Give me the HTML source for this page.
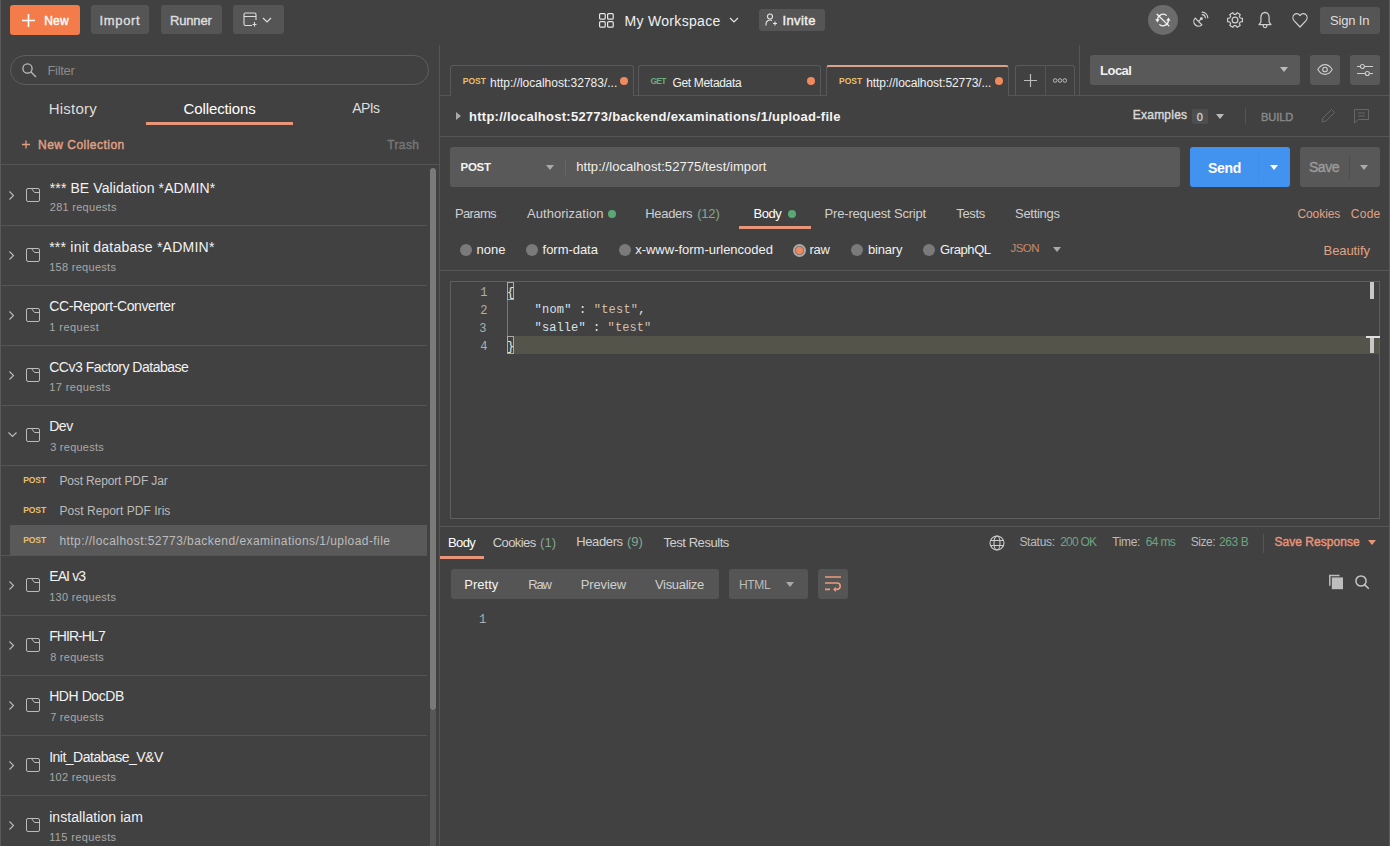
<!DOCTYPE html>
<html><head><meta charset="utf-8">
<style>
*{box-sizing:border-box;margin:0;padding:0}
html,body{width:1390px;height:846px;overflow:hidden;background:#414141;font-family:"Liberation Sans",sans-serif;color:#e6e6e6}
.a{position:absolute;white-space:nowrap;line-height:1.2}
.btn{position:absolute;background:#555;border-radius:3px}
.hl{position:absolute;height:1px;background:#555}
.vl{position:absolute;width:1px;background:#555}
svg{position:absolute;overflow:visible}
.g{color:#84a890}
</style></head><body>

<!-- left border strip -->
<div class="vl" style="left:0;top:0;height:846px;background:#5a5a5a"></div>

<!-- ===== TOP BAR ===== -->
<div class="btn" style="left:10px;top:5px;width:70px;height:30px;background:#f47b4a"></div>
<svg style="left:22px;top:14px" width="13" height="13"><path d="M6.5 0V13M0 6.5H13" stroke="#fff" stroke-width="1.6"/></svg>

<div class="btn" style="left:91px;top:5px;width:58px;height:29px"></div>
<div class="btn" style="left:161px;top:5px;width:61px;height:29px"></div>
<div class="btn" style="left:233px;top:5px;width:51px;height:29px"></div>
<svg style="left:243px;top:12px" width="16" height="16"><path d="M9 13.5H2.5a1.5 1.5 0 0 1-1.5-1.5V2.5A1.5 1.5 0 0 1 2.5 1h9A1.5 1.5 0 0 1 13 2.5V8M1 4.5h12M11.5 10v4.5M9.5 12.5h4" stroke="#ddd" stroke-width="1.1" fill="none"/></svg>
<svg style="left:262px;top:17px" width="10" height="6"><path d="M1 1l4 4 4-4" stroke="#ddd" stroke-width="1.2" fill="none"/></svg>

<!-- workspace -->
<svg style="left:599px;top:13px" width="16" height="15"><g stroke="#e6e6e6" stroke-width="1.2" fill="none"><rect x="0.6" y="0.6" width="5.6" height="5.6" rx="1"/><rect x="8.6" y="0.6" width="5.6" height="5.6" rx="1"/><rect x="0.6" y="8.6" width="5.6" height="5.6" rx="1"/><rect x="8.6" y="8.6" width="5.6" height="5.6" rx="1"/></g></svg>
<svg style="left:729px;top:17px" width="10" height="6"><path d="M1 1l4 4 4-4" stroke="#e6e6e6" stroke-width="1.2" fill="none"/></svg>
<div class="btn" style="left:759px;top:9px;width:66px;height:22px"></div>
<svg style="left:765px;top:13px" width="12" height="13"><g stroke="#e6e6e6" stroke-width="1.1" fill="none"><circle cx="5" cy="3.5" r="2.5"/><path d="M1 12.5V11a4 4 0 0 1 6-3.4M8 10.5h4M10 8.5v4"/></g></svg>

<!-- right icons -->

<svg style="left:1148px;top:5px" width="30" height="30"><circle cx="15" cy="15" r="15" fill="#6b6b6b"/>
<g stroke="#f2f2f2" stroke-width="1.3" fill="none" stroke-linecap="round">
<path d="M18.2 10.3A5.4 5.4 0 0 0 9.6 14.6"/><path d="M11.8 19.7A5.4 5.4 0 0 0 20.4 15.4"/>
<path d="M9.1 9.3L20.9 20.9"/></g>
<path d="M7.2 14.2h4.4L9.4 17.4z M18.2 15.8h4.4L20.4 12.6z" fill="#f2f2f2"/>
</svg>
<svg style="left:1192px;top:11px" width="17" height="17"><g stroke="#d0d0d0" stroke-width="1.2" fill="none" stroke-linecap="round">
<path d="M3.2 7.2A4.6 4.6 0 0 0 9.8 13.8z"/><path d="M6.5 10.5L9.2 7.8"/><circle cx="9.4" cy="7.6" r="0.9" fill="#d0d0d0"/>
<path d="M10.2 3.6A3.6 3.6 0 0 1 13.4 6.8"/><path d="M10.2 1.2A6 6 0 0 1 15.8 6.8"/>
</g></svg>
<svg style="left:1227px;top:12px" width="16" height="16"><g stroke="#d0d0d0" stroke-width="1.2" fill="none" stroke-linejoin="round"><path d="M13.24 6.01 L15.41 6.29 L15.41 9.71 L13.24 9.99 L12.34 11.54 L13.18 13.56 L10.22 15.27 L8.90 13.53 L7.10 13.53 L5.78 15.27 L2.82 13.56 L3.66 11.54 L2.76 9.99 L0.59 9.71 L0.59 6.29 L2.76 6.01 L3.66 4.46 L2.82 2.44 L5.78 0.73 L7.10 2.47 L8.90 2.47 L10.22 0.73 L13.18 2.44 L12.34 4.46Z"/><circle cx="8" cy="8" r="2.9"/></g></svg>
<svg style="left:1258px;top:11px" width="14" height="18"><g stroke="#d0d0d0" stroke-width="1.2" fill="none" stroke-linejoin="round">
<path d="M7 1.6C4.2 1.6 2.9 3.8 2.9 6.6V11.2L1 13.6H13L11.1 11.2V6.6C11.1 3.8 9.8 1.6 7 1.6z"/><path d="M5.2 13.8V14.8A1.8 1.8 0 0 0 8.8 14.8V13.8"/><path d="M6.3 1.3h1.4"/>
</g></svg>
<svg style="left:1292px;top:12px" width="16" height="16"><path d="M8 3.6C6.6 1.4 3.8 1.1 2.2 2.6C0.4 4.3 0.6 7 2.2 8.8L8 15L13.8 8.8C15.4 7 15.6 4.3 13.8 2.6C12.2 1.1 9.4 1.4 8 3.6z" stroke="#d0d0d0" stroke-width="1.2" fill="none" stroke-linejoin="round"/></svg>

<div class="btn" style="left:1320px;top:7px;width:60px;height:27px"></div>

<!-- ===== SIDEBAR ===== -->
<div class="a" style="left:10px;top:55px;width:419px;height:30px;border:1px solid #5e5e5e;border-radius:15px"></div>
<svg style="left:22px;top:63px" width="15" height="15"><g stroke="#bbb" stroke-width="1.3" fill="none"><circle cx="5.5" cy="5.5" r="4.6"/><path d="M9 9l5 5"/></g></svg>

<div class="a" style="left:146px;top:122px;width:147px;height:3px;background:#e8957a"></div>

<svg style="left:22px;top:140px" width="8" height="9"><path d="M4 0.5V8.5M0 4.5H8" stroke="#e0a080" stroke-width="1.3"/></svg>
<div class="hl" style="left:0;top:164px;width:439px"></div>

<svg style="left:9px;top:191px" width="6" height="9"><path d="M0.5 0.5l4 4-4 4" stroke="#bbb" stroke-width="1.1" fill="none"/></svg>
<svg style="left:26px;top:188px" width="14" height="14"><path d="M2 0.5h10a1.5 1.5 0 0 1 1.5 1.5v10a1.5 1.5 0 0 1-1.5 1.5H2A1.5 1.5 0 0 1 0.5 12V2A1.5 1.5 0 0 1 2 0.5zM5.5 0.5l3 4h5" stroke="#bbb" stroke-width="1" fill="none"/></svg>
<div class="hl" style="left:0;top:225px;width:427px"></div>
<svg style="left:9px;top:251px" width="6" height="9"><path d="M0.5 0.5l4 4-4 4" stroke="#bbb" stroke-width="1.1" fill="none"/></svg>
<svg style="left:26px;top:248px" width="14" height="14"><path d="M2 0.5h10a1.5 1.5 0 0 1 1.5 1.5v10a1.5 1.5 0 0 1-1.5 1.5H2A1.5 1.5 0 0 1 0.5 12V2A1.5 1.5 0 0 1 2 0.5zM5.5 0.5l3 4h5" stroke="#bbb" stroke-width="1" fill="none"/></svg>
<div class="hl" style="left:0;top:285px;width:427px"></div>
<svg style="left:9px;top:311px" width="6" height="9"><path d="M0.5 0.5l4 4-4 4" stroke="#bbb" stroke-width="1.1" fill="none"/></svg>
<svg style="left:26px;top:308px" width="14" height="14"><path d="M2 0.5h10a1.5 1.5 0 0 1 1.5 1.5v10a1.5 1.5 0 0 1-1.5 1.5H2A1.5 1.5 0 0 1 0.5 12V2A1.5 1.5 0 0 1 2 0.5zM5.5 0.5l3 4h5" stroke="#bbb" stroke-width="1" fill="none"/></svg>
<div class="hl" style="left:0;top:345px;width:427px"></div>
<svg style="left:9px;top:371px" width="6" height="9"><path d="M0.5 0.5l4 4-4 4" stroke="#bbb" stroke-width="1.1" fill="none"/></svg>
<svg style="left:26px;top:368px" width="14" height="14"><path d="M2 0.5h10a1.5 1.5 0 0 1 1.5 1.5v10a1.5 1.5 0 0 1-1.5 1.5H2A1.5 1.5 0 0 1 0.5 12V2A1.5 1.5 0 0 1 2 0.5zM5.5 0.5l3 4h5" stroke="#bbb" stroke-width="1" fill="none"/></svg>
<div class="hl" style="left:0;top:405px;width:427px"></div>
<svg style="left:8px;top:432px" width="9" height="6"><path d="M0.5 0.5l4 4 4-4" stroke="#bbb" stroke-width="1.1" fill="none"/></svg>
<svg style="left:26px;top:428px" width="14" height="14"><path d="M2 0.5h10a1.5 1.5 0 0 1 1.5 1.5v10a1.5 1.5 0 0 1-1.5 1.5H2A1.5 1.5 0 0 1 0.5 12V2A1.5 1.5 0 0 1 2 0.5zM5.5 0.5l3 4h5" stroke="#bbb" stroke-width="1" fill="none"/></svg>
<div class="hl" style="left:0;top:465px;width:427px"></div>
<div class="a" style="left:10px;top:525px;width:417px;height:30px;background:#595959"></div>
<div class="hl" style="left:0;top:555px;width:427px"></div>
<svg style="left:9px;top:581px" width="6" height="9"><path d="M0.5 0.5l4 4-4 4" stroke="#bbb" stroke-width="1.1" fill="none"/></svg>
<svg style="left:26px;top:578px" width="14" height="14"><path d="M2 0.5h10a1.5 1.5 0 0 1 1.5 1.5v10a1.5 1.5 0 0 1-1.5 1.5H2A1.5 1.5 0 0 1 0.5 12V2A1.5 1.5 0 0 1 2 0.5zM5.5 0.5l3 4h5" stroke="#bbb" stroke-width="1" fill="none"/></svg>
<div class="hl" style="left:0;top:615px;width:427px"></div>
<svg style="left:9px;top:641px" width="6" height="9"><path d="M0.5 0.5l4 4-4 4" stroke="#bbb" stroke-width="1.1" fill="none"/></svg>
<svg style="left:26px;top:638px" width="14" height="14"><path d="M2 0.5h10a1.5 1.5 0 0 1 1.5 1.5v10a1.5 1.5 0 0 1-1.5 1.5H2A1.5 1.5 0 0 1 0.5 12V2A1.5 1.5 0 0 1 2 0.5zM5.5 0.5l3 4h5" stroke="#bbb" stroke-width="1" fill="none"/></svg>
<div class="hl" style="left:0;top:675px;width:427px"></div>
<svg style="left:9px;top:701px" width="6" height="9"><path d="M0.5 0.5l4 4-4 4" stroke="#bbb" stroke-width="1.1" fill="none"/></svg>
<svg style="left:26px;top:698px" width="14" height="14"><path d="M2 0.5h10a1.5 1.5 0 0 1 1.5 1.5v10a1.5 1.5 0 0 1-1.5 1.5H2A1.5 1.5 0 0 1 0.5 12V2A1.5 1.5 0 0 1 2 0.5zM5.5 0.5l3 4h5" stroke="#bbb" stroke-width="1" fill="none"/></svg>
<div class="hl" style="left:0;top:735px;width:427px"></div>
<svg style="left:9px;top:761px" width="6" height="9"><path d="M0.5 0.5l4 4-4 4" stroke="#bbb" stroke-width="1.1" fill="none"/></svg>
<svg style="left:26px;top:758px" width="14" height="14"><path d="M2 0.5h10a1.5 1.5 0 0 1 1.5 1.5v10a1.5 1.5 0 0 1-1.5 1.5H2A1.5 1.5 0 0 1 0.5 12V2A1.5 1.5 0 0 1 2 0.5zM5.5 0.5l3 4h5" stroke="#bbb" stroke-width="1" fill="none"/></svg>
<div class="hl" style="left:0;top:795px;width:427px"></div>
<svg style="left:9px;top:821px" width="6" height="9"><path d="M0.5 0.5l4 4-4 4" stroke="#bbb" stroke-width="1.1" fill="none"/></svg>
<svg style="left:26px;top:818px" width="14" height="14"><path d="M2 0.5h10a1.5 1.5 0 0 1 1.5 1.5v10a1.5 1.5 0 0 1-1.5 1.5H2A1.5 1.5 0 0 1 0.5 12V2A1.5 1.5 0 0 1 2 0.5zM5.5 0.5l3 4h5" stroke="#bbb" stroke-width="1" fill="none"/></svg>
<div class="hl" style="left:0;top:855px;width:427px"></div>

<!-- divider -->
<div class="vl" style="left:439px;top:45px;height:801px"></div>
<!-- scrollbar -->
<div class="a" style="left:430px;top:710px;width:6px;height:136px;background:#565656"></div>
<div class="a" style="left:430px;top:168px;width:6px;height:542px;border-radius:3px;background:#7a7a7a"></div>

<!-- ===== MAIN ===== -->
<!-- tabs -->
<div class="vl" style="left:1079px;top:45px;height:51px"></div>
<div class="hl" style="left:440px;top:95px;width:950px"></div>
<div class="a" style="left:450px;top:65px;width:184px;height:31px;border:1px solid #595959;border-bottom:none;border-radius:3px 3px 0 0;background:#414141"></div>
<div class="a" style="left:620px;top:77px;width:8px;height:8px;border-radius:50%;background:#f08a5d"></div>

<div class="a" style="left:638px;top:65px;width:183px;height:31px;border:1px solid #595959;border-bottom:none;border-radius:3px 3px 0 0"></div>
<div class="a" style="left:807px;top:77px;width:8px;height:8px;border-radius:50%;background:#f08a5d"></div>

<div class="a" style="left:826px;top:65px;width:183px;height:31px;border:1px solid #595959;border-bottom:none;border-top:2px solid #dba18a;border-radius:3px 3px 0 0;background:#414141"></div>
<div class="a" style="left:995px;top:77px;width:8px;height:8px;border-radius:50%;background:#f08a5d"></div>

<div class="a" style="left:1015px;top:65px;width:60px;height:31px;border:1px solid #595959;border-bottom:none;border-radius:3px 3px 0 0"></div>
<div class="vl" style="left:1045px;top:65px;height:31px"></div>
<svg style="left:1024px;top:74px" width="13" height="13"><path d="M6.5 0V13M0 6.5H13" stroke="#bbb" stroke-width="1.2"/></svg>
<svg style="left:1053px;top:78px" width="14" height="5"><g stroke="#bbb" stroke-width="1" fill="none"><circle cx="2.2" cy="2.5" r="1.8"/><circle cx="7" cy="2.5" r="1.8"/><circle cx="11.8" cy="2.5" r="1.8"/></g></svg>

<!-- env -->
<div class="btn" style="left:1090px;top:55px;width:210px;height:30px;background:#595959"></div>
<svg style="left:1280px;top:67px" width="8" height="5"><path d="M0 0h8L4 5z" fill="#bbb"/></svg>
<div class="btn" style="left:1310px;top:55px;width:30px;height:30px;background:#595959"></div>
<svg style="left:1317px;top:64px" width="16" height="11"><g stroke="#ccc" stroke-width="1.1" fill="none"><path d="M0.8 5.5C3 1.8 5.5 0.6 8 0.6s5 1.2 7.2 4.9C13 9.2 10.5 10.4 8 10.4S3 9.2 0.8 5.5z"/><circle cx="8" cy="5.5" r="2.3"/></g></svg>
<div class="btn" style="left:1350px;top:55px;width:30px;height:30px;background:#595959"></div>
<svg style="left:1356px;top:63px" width="18" height="14"><g stroke="#ccc" stroke-width="1.1" fill="none"><path d="M1 3.5h3.4M8.4 3.5H17M1 10.5h8.3M13.3 10.5H17"/><circle cx="6.4" cy="3.5" r="2"/><circle cx="11.3" cy="10.5" r="2"/></g></svg>

<!-- breadcrumb -->
<svg style="left:456px;top:112px" width="5" height="8"><path d="M0 0v8l5-4z" fill="#aaa"/></svg>
<div class="a" style="left:1192px;top:109px;width:16px;height:15px;background:#4e4e4e;border-radius:2px"></div>
<svg style="left:1216px;top:114px" width="8" height="5"><path d="M0 0h8L4 5z" fill="#bbb"/></svg>
<div class="vl" style="left:1245px;top:108px;height:16px"></div>
<svg style="left:1321px;top:109px" width="14" height="14"><path d="M1 13l1-4 8.5-8.5 3 3L5 12z" stroke="#666" stroke-width="1" fill="none"/></svg>
<svg style="left:1354px;top:109px" width="15" height="15"><path d="M0.5 0.5h14v10h-10l-4 3.5z M4 4h7M4 7h7" stroke="#666" stroke-width="1" fill="none"/></svg>
<div class="hl" style="left:440px;top:136px;width:950px"></div>

<!-- URL bar -->
<div class="btn" style="left:450px;top:147px;width:730px;height:40px;background:#595959"></div>
<svg style="left:546px;top:165px" width="8" height="5"><path d="M0 0h8L4 5z" fill="#aaa"/></svg>
<div class="vl" style="left:565px;top:160px;height:15px;background:#666"></div>
<div class="btn" style="left:1190px;top:147px;width:100px;height:40px;background:#4292f0"></div>
<div class="vl" style="left:1258px;top:155px;height:25px;background:#3e8de8"></div>
<svg style="left:1270px;top:165px" width="8" height="5"><path d="M0 0h8L4 5z" fill="#fff"/></svg>
<div class="btn" style="left:1300px;top:147px;width:80px;height:40px;background:#585858"></div>
<div class="vl" style="left:1349px;top:155px;height:25px;background:#4e4e4e"></div>
<svg style="left:1360px;top:165px" width="8" height="5"><path d="M0 0h8L4 5z" fill="#aaa"/></svg>

<!-- request tabs -->
<div class="a" style="left:608px;top:210px;width:8px;height:8px;border-radius:50%;background:#5aa874"></div>
<div class="a" style="left:788px;top:210px;width:8px;height:8px;border-radius:50%;background:#5aa874"></div>
<div class="a" style="left:739px;top:226px;width:72px;height:3px;background:#e8957a"></div>

<!-- body type radios -->
<div class="a" style="left:460px;top:244px;width:12px;height:12px;border-radius:50%;background:#7a7a7a"></div>
<div class="a" style="left:526px;top:244px;width:12px;height:12px;border-radius:50%;background:#7a7a7a"></div>
<div class="a" style="left:619px;top:244px;width:12px;height:12px;border-radius:50%;background:#7a7a7a"></div>
<div class="a" style="left:793px;top:244px;width:13px;height:13px;border-radius:50%;background:radial-gradient(circle,#f08a5d 0 3.3px,#8c7870 3.8px 4.4px,#b3a9a4 4.9px)"></div>
<div class="a" style="left:851px;top:244px;width:12px;height:12px;border-radius:50%;background:#7a7a7a"></div>
<div class="a" style="left:923px;top:244px;width:12px;height:12px;border-radius:50%;background:#7a7a7a"></div>
<svg style="left:1053px;top:247px" width="8" height="5"><path d="M0 0h8L4 5z" fill="#aaa"/></svg>
<div class="hl" style="left:440px;top:270px;width:950px"></div>

<!-- editor -->
<div class="a" style="left:450px;top:281px;width:930px;height:238px;border:1px solid #5e5e5e"></div>
<div class="vl" style="left:507px;top:300px;height:36px;background:#777"></div>
<div class="a" style="left:514px;top:336px;width:865px;height:18px;background:#54544a"></div>
<div class="a" style="left:507px;top:282px;width:7px;height:18px;border:1px solid #aaa"></div>
<div class="a" style="left:507px;top:336px;width:7px;height:18px;border:1px solid #aaa"></div>
<div class="a" style="left:1370px;top:282px;width:4px;height:17px;background:#c8c8c8"></div>
<div class="a" style="left:1370px;top:337px;width:4px;height:16px;background:#c8c8c8"></div>
<div class="a" style="left:1366px;top:336px;width:14px;height:2px;background:#e0e0e0"></div>

<div class="hl" style="left:440px;top:526px;width:950px"></div>
<div class="vl" style="left:1389px;top:0;height:846px;background:#5a5a5a"></div>

<!-- response tabs -->
<div class="a" style="left:440px;top:556px;width:44px;height:3px;background:#e8957a"></div>

<svg style="left:989px;top:535px" width="16" height="16"><g stroke="#ccc" stroke-width="1.1" fill="none"><circle cx="8" cy="8" r="7"/><ellipse cx="8" cy="8" rx="3" ry="7"/><path d="M1.5 5.5h13M1.5 10.5h13"/></g></svg>
<div class="vl" style="left:1263px;top:534px;height:19px"></div>
<svg style="left:1368px;top:540px" width="8" height="5"><path d="M0 0h8L4 5z" fill="#e8957a"/></svg>

<div class="btn" style="left:451px;top:569px;width:268px;height:30px;background:#555"></div>
<div class="btn" style="left:729px;top:569px;width:79px;height:30px;background:#555"></div>
<svg style="left:786px;top:582px" width="8" height="5"><path d="M0 0h8L4 5z" fill="#aaa"/></svg>
<div class="btn" style="left:818px;top:569px;width:30px;height:30px;background:#555"></div>
<svg style="left:824px;top:575px" width="18" height="17"><g stroke="#eb9a7c" stroke-width="1.7" fill="none"><path d="M1 2h16M1 8h12a3.2 3.2 0 0 1 0 6.4H11M1 14.4h5"/></g><path d="M11.8 11.8v5.2L9 14.4z" fill="#eb9a7c"/></svg>
<svg style="left:1328px;top:574px" width="16" height="16"><path d="M1.8 11.8V1.6H11.6" stroke="#bdbdbd" stroke-width="1.5" fill="none"/><rect x="3.2" y="3.2" width="12.2" height="12.4" fill="#414141"/><rect x="3.8" y="3.4" width="11.2" height="11.8" fill="#bdbdbd"/></svg>
<svg style="left:1355px;top:575px" width="15" height="15"><g stroke="#c4c4c4" stroke-width="1.5" fill="none"><circle cx="6" cy="6" r="5.1"/><path d="M9.6 9.6l4.2 4.2"/></g></svg>



<div class="a" id="new" style="left:44.2px;top:14.0px;font-size:12px;color:#fff;-webkit-text-stroke:0.4px currentColor;letter-spacing:0.2px;">New</div>
<div class="a" id="import" style="left:99.6px;top:12.8px;font-size:13px;color:#ddd;-webkit-text-stroke:0.4px currentColor;letter-spacing:0.64px;">Import</div>
<div class="a" id="runner" style="left:170.0px;top:12.8px;font-size:13px;color:#ddd;-webkit-text-stroke:0.4px currentColor;letter-spacing:-0.16px;">Runner</div>
<div class="a" id="ws" style="left:624.4px;top:13.4px;font-size:14px;color:#f0f0f0;letter-spacing:0.326px;">My Workspace</div>
<div class="a" id="invite" style="left:782.4px;top:13.0px;font-size:13px;color:#f0f0f0;-webkit-text-stroke:0.4px currentColor;letter-spacing:0.4px;">Invite</div>
<div class="a" id="signin" style="left:1330.0px;top:13.0px;font-size:13px;color:#ddd;letter-spacing:-0.167px;">Sign In</div>
<div class="a" id="filter" style="left:47.4px;top:63.2px;font-size:13px;color:#8a8a8a;letter-spacing:-0.28px;">Filter</div>
<div class="a" id="history" style="left:48.8px;top:100.0px;font-size:15px;color:#ddd;letter-spacing:0.198px;">History</div>
<div class="a" id="collections" style="left:183.6px;top:100.0px;font-size:15px;color:#fff;letter-spacing:-0.12px;">Collections</div>
<div class="a" id="apis" style="left:352.2px;top:100.0px;font-size:14px;color:#ddd;letter-spacing:-0.6px;">APIs</div>
<div class="a" id="newcoll" style="left:38.0px;top:137.8px;font-size:12px;color:#e0a285;-webkit-text-stroke:0.4px currentColor;letter-spacing:0.479px;">New Collection</div>
<div class="a" id="trash" style="left:387.2px;top:137.8px;font-size:12px;color:#777;-webkit-text-stroke:0.4px currentColor;letter-spacing:0.4px;">Trash</div>
<div class="a" id="ct0" style="left:49.8px;top:179.6px;font-size:14px;color:#f2f2f2;letter-spacing:0.092px;">*** BE Validation *ADMIN*</div>
<div class="a" id="cs0" style="left:49.8px;top:201.3px;font-size:11px;color:#a8a8a8;letter-spacing:0.273px;">281 requests</div>
<div class="a" id="ct1" style="left:49.2px;top:238.8px;font-size:14px;color:#f2f2f2;letter-spacing:0.234px;">*** init database *ADMIN*</div>
<div class="a" id="cs1" style="left:49.2px;top:261.3px;font-size:11px;color:#a8a8a8;letter-spacing:0.283px;">158 requests</div>
<div class="a" id="ct2" style="left:49.2px;top:297.8px;font-size:14px;color:#f2f2f2;letter-spacing:-0.383px;">CC-Report-Converter</div>
<div class="a" id="cs2" style="left:49.2px;top:321.3px;font-size:11px;color:#a8a8a8;letter-spacing:0.462px;">1 request</div>
<div class="a" id="ct3" style="left:49.2px;top:358.8px;font-size:14px;color:#f2f2f2;letter-spacing:-0.486px;">CCv3 Factory Database</div>
<div class="a" id="cs3" style="left:49.2px;top:381.3px;font-size:11px;color:#a8a8a8;letter-spacing:0.383px;">17 requests</div>
<div class="a" id="ct4" style="left:49.2px;top:417.8px;font-size:14px;color:#f2f2f2;letter-spacing:-0.466px;">Dev</div>
<div class="a" id="cs4" style="left:50.2px;top:441.3px;font-size:11px;color:#a8a8a8;letter-spacing:0.249px;">3 requests</div>
<div class="a" id="ct5" style="left:49.2px;top:567.8px;font-size:14px;color:#f2f2f2;letter-spacing:-0.876px;">EAI v3</div>
<div class="a" id="cs5" style="left:49.2px;top:591.3px;font-size:11px;color:#a8a8a8;letter-spacing:0.283px;">130 requests</div>
<div class="a" id="ct6" style="left:49.2px;top:627.8px;font-size:14px;color:#f2f2f2;letter-spacing:-0.933px;">FHIR-HL7</div>
<div class="a" id="cs6" style="left:50.2px;top:651.3px;font-size:11px;color:#a8a8a8;letter-spacing:0.249px;">8 requests</div>
<div class="a" id="ct7" style="left:49.2px;top:687.8px;font-size:14px;color:#f2f2f2;letter-spacing:-0.441px;">HDH DocDB</div>
<div class="a" id="cs7" style="left:50.2px;top:711.3px;font-size:11px;color:#a8a8a8;letter-spacing:0.249px;">7 requests</div>
<div class="a" id="ct8" style="left:49.2px;top:748.8px;font-size:14px;color:#f2f2f2;letter-spacing:-0.506px;">Init_Database_V&amp;V</div>
<div class="a" id="cs8" style="left:49.2px;top:771.3px;font-size:11px;color:#a8a8a8;letter-spacing:0.283px;">102 requests</div>
<div class="a" id="ct9" style="left:49.2px;top:808.8px;font-size:14px;color:#f2f2f2;letter-spacing:0.07px;">installation iam</div>
<div class="a" id="cs9" style="left:49.2px;top:831.3px;font-size:11px;color:#a8a8a8;letter-spacing:0.374px;">115 requests</div>
<div class="a" id="kp0" style="left:23.2px;top:474.8px;font-size:8.5px;color:#e8c06a;font-weight:bold;letter-spacing:-0.066px;">POST</div>
<div class="a" id="kt0" style="left:59.4px;top:474.0px;font-size:12px;color:#bcbcbc;letter-spacing:-0.133px;">Post Report PDF Jar</div>
<div class="a" id="kp1" style="left:23.2px;top:504.8px;font-size:8.5px;color:#e8c06a;font-weight:bold;letter-spacing:-0.066px;">POST</div>
<div class="a" id="kt1" style="left:59.4px;top:504.0px;font-size:12px;color:#bcbcbc;letter-spacing:0.05px;">Post Report PDF Iris</div>
<div class="a" id="kp2" style="left:23.2px;top:534.8px;font-size:8.5px;color:#e8c06a;font-weight:bold;letter-spacing:-0.066px;">POST</div>
<div class="a" id="kt2" style="left:59.4px;top:534.0px;font-size:12px;color:#bcbcbc;letter-spacing:0.448px;">http://localhost:52773/backend/examinations/1/upload-file</div>
<div class="a" id="t1p" style="left:462.8px;top:76.2px;font-size:8.5px;color:#e8c06a;font-weight:bold;letter-spacing:-0.001px;">POST</div>
<div class="a" id="t1u" style="left:490.0px;top:76.0px;font-size:12px;color:#f0f0f0;letter-spacing:-0.008px;">http://localhost:32783/...</div>
<div class="a" id="t2p" style="left:650.4px;top:76.2px;font-size:8.5px;color:#6aab7e;font-weight:bold;letter-spacing:-0.7px;">GET</div>
<div class="a" id="t2u" style="left:672.4px;top:76.0px;font-size:12px;color:#f0f0f0;letter-spacing:-0.311px;">Get Metadata</div>
<div class="a" id="t3p" style="left:839.0px;top:76.2px;font-size:8.5px;color:#e8c06a;font-weight:bold;letter-spacing:-0.001px;">POST</div>
<div class="a" id="t3u" style="left:866.2px;top:76.0px;font-size:12px;color:#f0f0f0;letter-spacing:-0.088px;">http://localhost:52773/...</div>
<div class="a" id="crumb" style="left:469.0px;top:108.8px;font-size:13px;color:#f4f4f4;font-weight:bold;letter-spacing:0.259px;">http://localhost:52773/backend/examinations/1/upload-file</div>
<div class="a" id="local" style="left:1100.0px;top:62.8px;font-size:13px;color:#f0f0f0;font-weight:bold;letter-spacing:-0.5px;">Local</div>
<div class="a" id="examples" style="left:1132.8px;top:108.4px;font-size:12px;color:#d8d8d8;-webkit-text-stroke:0.4px currentColor;letter-spacing:0.224px;">Examples</div>
<div class="a" id="zero" style="left:1196.8px;top:111.2px;font-size:11px;color:#ccc;-webkit-text-stroke:0.4px currentColor;">0</div>
<div class="a" id="build" style="left:1261.0px;top:111.2px;font-size:11px;color:#8a8a8a;-webkit-text-stroke:0.4px currentColor;letter-spacing:-0.05px;">BUILD</div>
<div class="a" id="mpost" style="left:460.6px;top:160.8px;font-size:11.5px;color:#f4f4f4;font-weight:bold;letter-spacing:-0.333px;">POST</div>
<div class="a" id="url" style="left:576.2px;top:158.8px;font-size:13px;color:#f0f0f0;letter-spacing:0.073px;">http://localhost:52775/test/import</div>
<div class="a" id="send" style="left:1208.0px;top:160.0px;font-size:14px;color:#fff;font-weight:bold;letter-spacing:-0.268px;">Send</div>
<div class="a" id="save" style="left:1309.0px;top:159.0px;font-size:14px;color:#9a9a9a;-webkit-text-stroke:0.4px currentColor;letter-spacing:-0.464px;">Save</div>
<div class="a" id="params" style="left:455.0px;top:206.0px;font-size:13px;color:#cfcfcf;letter-spacing:-0.64px;">Params</div>
<div class="a" id="auth" style="left:527.0px;top:206.0px;font-size:13px;color:#cfcfcf;letter-spacing:0.048px;">Authorization</div>
<div class="a" id="headers" style="left:645.2px;top:206.0px;font-size:13px;color:#cfcfcf;letter-spacing:-0.299px;">Headers</div>
<div class="a" id="h12" style="left:697.2px;top:206.0px;font-size:13px;color:#84a890;letter-spacing:-0.197px;">(12)</div>
<div class="a" id="body" style="left:753.6px;top:206.0px;font-size:13px;color:#fff;letter-spacing:-0.467px;">Body</div>
<div class="a" id="prereq" style="left:824.6px;top:206.0px;font-size:13px;color:#cfcfcf;letter-spacing:-0.185px;">Pre-request Script</div>
<div class="a" id="tests" style="left:956.2px;top:206.0px;font-size:13px;color:#cfcfcf;letter-spacing:-0.3px;">Tests</div>
<div class="a" id="settings" style="left:1015.0px;top:206.0px;font-size:13px;color:#cfcfcf;letter-spacing:-0.286px;">Settings</div>
<div class="a" id="cookies" style="left:1297.4px;top:207.2px;font-size:12px;color:#e0a285;letter-spacing:-0.069px;">Cookies</div>
<div class="a" id="code" style="left:1350.8px;top:207.2px;font-size:12px;color:#e0a285;letter-spacing:0.268px;">Code</div>
<div class="a" id="none" style="left:476.4px;top:241.8px;font-size:13px;color:#f0f0f0;letter-spacing:0.065px;">none</div>
<div class="a" id="formdata" style="left:542.6px;top:241.8px;font-size:13px;color:#f0f0f0;letter-spacing:-0.042px;">form-data</div>
<div class="a" id="xwww" style="left:635.2px;top:241.8px;font-size:13px;color:#f0f0f0;letter-spacing:-0.01px;">x-www-form-urlencoded</div>
<div class="a" id="raw" style="left:809.4px;top:241.8px;font-size:13px;color:#f0f0f0;letter-spacing:-0.2px;">raw</div>
<div class="a" id="binary" style="left:868.0px;top:241.8px;font-size:13px;color:#f0f0f0;letter-spacing:-0.2px;">binary</div>
<div class="a" id="graphql" style="left:940.0px;top:241.8px;font-size:13px;color:#f0f0f0;letter-spacing:-0.399px;">GraphQL</div>
<div class="a" id="json" style="left:1010.6px;top:242.3px;font-size:11.5px;color:#c88a6a;letter-spacing:-0.601px;">JSON</div>
<div class="a" id="beautify" style="left:1323.6px;top:243.4px;font-size:13px;color:#e0a285;letter-spacing:-0.089px;">Beautify</div>
<div class="a" id="rbody" style="left:448.0px;top:535.2px;font-size:13px;color:#fff;letter-spacing:-0.601px;">Body</div>
<div class="a" id="rcookies" style="left:492.8px;top:535.2px;font-size:13px;color:#cfcfcf;letter-spacing:-0.597px;">Cookies</div>
<div class="a" id="rc1" style="left:540.0px;top:535.2px;font-size:13px;color:#84a890;letter-spacing:0.1px;">(1)</div>
<div class="a" id="rheaders" style="left:576.2px;top:534.4px;font-size:13px;color:#cfcfcf;letter-spacing:-0.368px;">Headers</div>
<div class="a" id="rh9" style="left:627.0px;top:534.4px;font-size:13px;color:#84a890;">(9)</div>
<div class="a" id="testres" style="left:663.4px;top:535.2px;font-size:13px;color:#cfcfcf;letter-spacing:-0.439px;">Test Results</div>
<div class="a" id="status" style="left:1019.4px;top:535.3px;font-size:12px;color:#bbb;letter-spacing:-0.27px;">Status:</div>
<div class="a" id="s200" style="left:1060.2px;top:535.3px;font-size:12px;color:#6ea482;letter-spacing:-0.76px;">200 OK</div>
<div class="a" id="time" style="left:1112.2px;top:535.3px;font-size:12px;color:#bbb;letter-spacing:-0.35px;">Time:</div>
<div class="a" id="t64" style="left:1145.8px;top:535.3px;font-size:12px;color:#6ea482;letter-spacing:-0.65px;">64 ms</div>
<div class="a" id="size" style="left:1190.8px;top:535.3px;font-size:12px;color:#bbb;letter-spacing:-0.45px;">Size:</div>
<div class="a" id="s263" style="left:1219.0px;top:535.3px;font-size:12px;color:#6ea482;letter-spacing:-0.4px;">263 B</div>
<div class="a" id="saveresp" style="left:1274.4px;top:535.3px;font-size:12px;color:#e8957a;-webkit-text-stroke:0.4px currentColor;letter-spacing:0.053px;">Save Response</div>
<div class="a" id="pretty" style="left:464.2px;top:576.8px;font-size:13px;color:#f4f4f4;letter-spacing:0.04px;">Pretty</div>
<div class="a" id="raw2" style="left:528.2px;top:576.8px;font-size:13px;color:#cfcfcf;letter-spacing:-1.1px;">Raw</div>
<div class="a" id="preview" style="left:580.8px;top:576.8px;font-size:13px;color:#cfcfcf;letter-spacing:-0.136px;">Preview</div>
<div class="a" id="visualize" style="left:655.0px;top:576.8px;font-size:13px;color:#cfcfcf;letter-spacing:-0.325px;">Visualize</div>
<div class="a" id="html" style="left:739.0px;top:578.4px;font-size:12px;color:#bbb;letter-spacing:-0.334px;">HTML</div>
<div class="a" id="ln1" style="left:480.2px;top:286.3px;font-size:12px;color:#b0b0b0;font-family:'Liberation Mono',monospace;">1</div>
<div class="a" id="ln2" style="left:480.2px;top:304.3px;font-size:12px;color:#b0b0b0;font-family:'Liberation Mono',monospace;">2</div>
<div class="a" id="ln3" style="left:479.2px;top:322.3px;font-size:12px;color:#b0b0b0;font-family:'Liberation Mono',monospace;">3</div>
<div class="a" id="ln4" style="left:480.2px;top:340.3px;font-size:12px;color:#b0b0b0;font-family:'Liberation Mono',monospace;">4</div>
<div class="a" id="code2" style="left:534.6px;top:303.4px;font-size:12px;color:#e8e8e8;letter-spacing:0.198px;font-family:'Liberation Mono',monospace;"><span style="color:#d6e2ee">"nom"</span> : <span style="color:#d2bfae">"test"</span>,</div>
<div class="a" id="code3" style="left:534.6px;top:321.4px;font-size:12px;color:#e8e8e8;letter-spacing:0.096px;font-family:'Liberation Mono',monospace;"><span style="color:#d6e2ee">"salle"</span> : <span style="color:#d2bfae">"test"</span></div>
<div class="a" id="brace1" style="left:507.0px;top:285.5px;font-size:12px;color:#e8e8e8;font-family:'Liberation Mono',monospace;">{</div>
<div class="a" id="brace4" style="left:507.0px;top:339.5px;font-size:12px;color:#e8e8e8;font-family:'Liberation Mono',monospace;">}</div>
<div class="a" id="rln1" style="left:479.1px;top:612.8px;font-size:12px;color:#b0b0b0;font-family:'Liberation Mono',monospace;">1</div>
</body></html>
